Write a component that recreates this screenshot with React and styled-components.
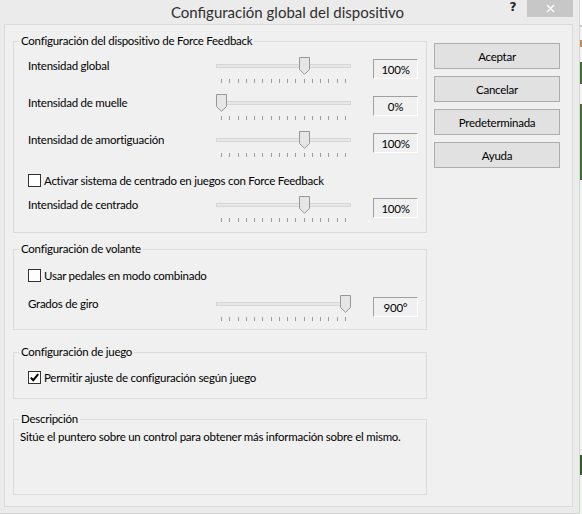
import React from 'react';
import styled, { createGlobalStyle } from 'styled-components';

const GlobalStyle = createGlobalStyle`
    html, body {
        margin: 0;
        padding: 0;
        background: #ececec;
    }
    body {
        font-family: Lato, "Liberation Sans", sans-serif;
        color: #000;
    }
`

const Page = styled.div`
    width: 582px;
    height: 514px;
    display: flex;
    overflow: hidden;
`

const Window = styled.div`
    width: 580px;
    flex-shrink: 0;
    box-sizing: border-box;
    background: #ebebeb;
    border-right: 1px solid #d6d6d6;
    border-bottom: 1px solid #d4d4d4;
    display: flex;
    flex-direction: column;
    align-self: flex-start;
`

const Desktop = styled.div`
    flex: 1;
    background: linear-gradient(
        to bottom,
        #ffffff 0px, #ffffff 25px,
        #c8c8c8 25px, #c8c8c8 27px,
        #f4f4f4 27px, #f4f4f4 40px,
        #c98a55 40px, #c98a55 47px,
        #f4f4f4 47px, #f4f4f4 62px,
        #3f6b30 62px, #3f6b30 84px,
        #f4f4f4 84px, #f4f4f4 104px,
        #3f6b30 104px, #3f6b30 180px,
        #eef3ee 180px, #eef3ee 455px,
        #355a2a 455px, #355a2a 475px,
        #eef6ee 475px
    );
`

const TitleBar = styled.div`
    height: 24px;
    display: flex;
    align-items: flex-start;
`

const Title = styled.div`
    flex: 1;
    padding-left: 76px;
    text-align: center;
    font-size: 15px;
    line-height: 24px;
    color: #2f2f2f;
    white-space: nowrap;
`

const HelpButton = styled.div`
    width: 28px;
    height: 17px;
    line-height: 15px;
    text-align: center;
    font-family: "DejaVu Sans", sans-serif;
    font-weight: bold;
    font-size: 12px;
    color: #222;
`

const CloseButton = styled.div`
    width: 46px;
    height: 17px;
    margin-right: 6px;
    background: #c7c7c7;
    color: #fff;
    display: flex;
    align-items: center;
    justify-content: center;
`

const Client = styled.div`
    margin: 0 6px 6px 4px;
    border: 1px solid #d9d9d9;
    background: #f0f0f0;
    padding: 8px 12px 11px 8px;
    display: flex;
    gap: 7px;
    font-size: 11.5px;
    letter-spacing: -0.25px;
`

const LeftColumn = styled.div`
    width: 414px;
    display: flex;
    flex-direction: column;
`

const GroupBox = styled.fieldset`
    margin: ${p => p.$mt || 0}px 0 0 0;
    padding: 0 0 ${p => p.$pb || 0}px 0;
    border: 1px solid #dcdcdc;
    min-width: 0;
`

const Legend = styled.legend`
    margin-left: 5px;
    padding: 0 2px;
    line-height: 16px;
`

const SliderRow = styled.div`
    display: flex;
    align-items: flex-start;
    height: 26px;
    padding: 0 8px 0 14px;
    margin-top: ${p => p.$mt || 0}px;
`

const Label = styled.div`
    flex: 1;
    margin-top: 1px;
    line-height: 16px;
    white-space: nowrap;
`

const SliderBox = styled.div`
    position: relative;
    width: 135px;
    height: 26px;
    margin-right: 22px;
    flex-shrink: 0;
`

const Track = styled.div`
    margin-top: 7px;
    height: 4px;
    box-sizing: border-box;
    border: 1px solid #d6d6d6;
    background: #e7e7e7;
`

const Ticks = styled.div`
    display: flex;
    justify-content: space-between;
    padding: 0 5px;
    margin-top: 11px;
    height: 4px;
`

const Tick = styled.span`
    width: 1px;
    height: 4px;
    background: #9a9a9a;
`

const Thumb = styled.svg`
    position: absolute;
    top: 0;
    width: 11px;
    height: 18px;
`

const ValueBox = styled.div`
    width: 45px;
    height: 20px;
    box-sizing: border-box;
    margin-top: 2px;
    border: 1px solid;
    border-color: #a0a0a0 #ffffff #ffffff #a0a0a0;
    display: flex;
    align-items: center;
    justify-content: center;
    flex-shrink: 0;
`

const CheckRow = styled.div`
    display: flex;
    align-items: center;
    height: 16px;
    padding-left: 14px;
    margin-top: ${p => p.$mt || 0}px;
    white-space: nowrap;
`

const CheckBox = styled.span`
    width: 13px;
    height: 13px;
    box-sizing: border-box;
    border: 1px solid #333;
    background: #fff;
    margin-right: 3px;
    display: flex;
    align-items: center;
    justify-content: center;
`

const Description = styled.div`
    margin-top: 2px;
    padding: 0 0 49px 6px;
    line-height: 16px;
    white-space: nowrap;
`

const ButtonColumn = styled.div`
    width: 126px;
    padding-top: 10px;
    display: flex;
    flex-direction: column;
    gap: 7px;
`

const Button = styled.button`
    height: 26px;
    padding: 0;
    border: 1px solid #adadad;
    background: #e1e1e1;
    font-family: Lato, "Liberation Sans", sans-serif;
    font-size: 11.5px;
    letter-spacing: -0.25px;
    color: #000;
`

const TICKS = Array.from({ length: 16 })

function Slider({ label, value, text, mt }) {
    return (
        <SliderRow $mt={mt}>
            <Label>{label}</Label>
            <SliderBox>
                <Track />
                <Ticks>
                    {TICKS.map((_, i) => <Tick key={i} />)}
                </Ticks>
                <Thumb viewBox="0 0 11 18" style={{ left: value * 124 }}>
                    <path d="M0.5 0.5 H10.5 V12.5 L5.5 17.3 L0.5 12.5 Z" fill="#e6e6e6" stroke="#979797" />
                </Thumb>
            </SliderBox>
            <ValueBox>{text}</ValueBox>
        </SliderRow>
    )
}

function Check({ label, checked, mt }) {
    return (
        <CheckRow $mt={mt}>
            <CheckBox>
                {checked && (
                    <svg width="11" height="11" viewBox="0 0 11 11">
                        <path d="M1.8 5.6 L4.3 8.2 L9.2 2.2" fill="none" stroke="#000" strokeWidth="2" />
                    </svg>
                )}
            </CheckBox>
            {label}
        </CheckRow>
    )
}

export default function App() {
    return (
        <Page>
            <GlobalStyle />
            <Window>
                <TitleBar>
                    <Title>Configuración global del dispositivo</Title>
                    <HelpButton>?</HelpButton>
                    <CloseButton>
                        <svg width="9" height="9" viewBox="0 0 9 9">
                            <path d="M1 1 L8 8 M8 1 L1 8" stroke="#fff" strokeWidth="1.4" />
                        </svg>
                    </CloseButton>
                </TitleBar>
                <Client>
                    <LeftColumn>
                        <GroupBox $pb={10}>
                            <Legend>Configuración del dispositivo de Force Feedback</Legend>
                            <Slider mt={8} label="Intensidad global" value={10 / 15} text="100%" />
                            <Slider mt={11} label="Intensidad de muelle" value={0} text="0%" />
                            <Slider mt={11} label="Intensidad de amortiguación" value={10 / 15} text="100%" />
                            <Check mt={15} label="Activar sistema de centrado en juegos con Force Feedback" />
                            <Slider mt={8} label="Intensidad de centrado" value={10 / 15} text="100%" />
                        </GroupBox>
                        <GroupBox $mt={8} $pb={8}>
                            <Legend>Configuración de volante</Legend>
                            <Check mt={10} label="Usar pedales en modo combinado" />
                            <Slider mt={12} label="Grados de giro" value={1} text="900°" />
                        </GroupBox>
                        <GroupBox $mt={14} $pb={13}>
                            <Legend>Configuración de juego</Legend>
                            <Check mt={9} checked label="Permitir ajuste de configuración según juego" />
                        </GroupBox>
                        <GroupBox $mt={12}>
                            <Legend>Descripción</Legend>
                            <Description>
                                Sitúe el puntero sobre un control para obtener más información sobre el mismo.
                            </Description>
                        </GroupBox>
                    </LeftColumn>
                    <ButtonColumn>
                        <Button>Aceptar</Button>
                        <Button>Cancelar</Button>
                        <Button>Predeterminada</Button>
                        <Button>Ayuda</Button>
                    </ButtonColumn>
                </Client>
            </Window>
            <Desktop />
        </Page>
    )
}
